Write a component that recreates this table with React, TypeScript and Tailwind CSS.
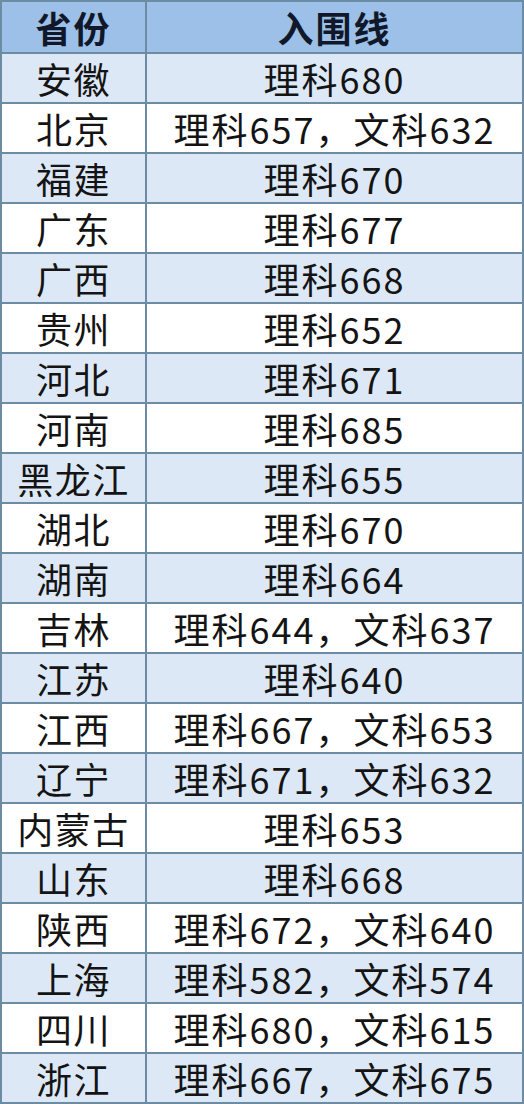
import React from "react";

const rows: [string, string][] = [
  ["安徽", "理科680"],
  ["北京", "理科657，文科632"],
  ["福建", "理科670"],
  ["广东", "理科677"],
  ["广西", "理科668"],
  ["贵州", "理科652"],
  ["河北", "理科671"],
  ["河南", "理科685"],
  ["黑龙江", "理科655"],
  ["湖北", "理科670"],
  ["湖南", "理科664"],
  ["吉林", "理科644，文科637"],
  ["江苏", "理科640"],
  ["江西", "理科667，文科653"],
  ["辽宁", "理科671，文科632"],
  ["内蒙古", "理科653"],
  ["山东", "理科668"],
  ["陕西", "理科672，文科640"],
  ["上海", "理科582，文科574"],
  ["四川", "理科680，文科615"],
  ["浙江", "理科667，文科675"],
];

export default function App() {
  return (
    <div className="w-[524px] h-[1104px] bg-white font-['Noto_Sans_CJK_SC',sans-serif] text-[#141414]">
      <table className="w-full border-collapse border-2 border-[#6c8ca4] table-fixed">
        <colgroup>
          <col className="w-[145px]" />
          <col />
        </colgroup>
        <thead>
          <tr className="h-[52px] bg-[#9cc0e7]">
            <th className="border-2 border-[#6c8ca4] text-[36px] font-bold leading-none tracking-[2px] text-[#10182a]">省份</th>
            <th className="border-2 border-[#6c8ca4] text-[36px] font-bold leading-none tracking-[2px] text-[#10182a]">入围线</th>
          </tr>
        </thead>
        <tbody>
          {rows.map(([prov, line], i) => (
            <tr key={prov} className={i % 2 === 0 ? "h-[50px] bg-[#dde8f6]" : "h-[50px] bg-white"}>
              <td className="border-2 border-[#6c8ca4] text-center text-[36px] leading-none tracking-[1.5px]">{prov}</td>
              <td className="border-2 border-[#6c8ca4] text-center text-[36px] leading-none tracking-[2px]">{line}</td>
            </tr>
          ))}
        </tbody>
      </table>
    </div>
  );
}
